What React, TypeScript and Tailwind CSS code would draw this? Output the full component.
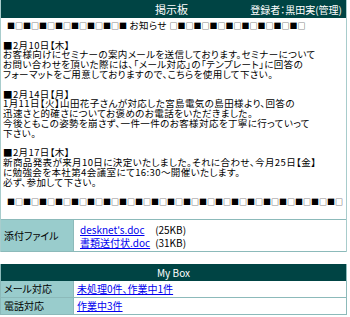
const font = {
  fontFamily: '"Noto Sans CJK JP", "Noto Sans", sans-serif',
  fontFeatureSettings: '"palt"',
};

const S = ({ children }: { children: string }) => <span className="text-[8px] tracking-normal">{children}</span>;

const lines: React.ReactNode[] = [
  <span className="pl-[4px]">
    <S>■□■□■□■□■□■□■□■</S> お知らせ <S>□■□■□■□■□■□■□■□■□</S>
  </span>,
  '',
  '■2月10日【木】',
  'お客様向けにセミナーの案内メールを送信しております。セミナーについて',
  'お問い合わせを頂いた際には、「メール対応」の「テンプレート」に回答の',
  'フォーマットをご用意しておりますので、こちらを使用して下さい。',
  '',
  '■2月14日【月】',
  '1月11日【火】山田花子さんが対応した宮島電気の島田様より、回答の',
  '迅速さと的確さについてお褒めのお電話をいただきました。',
  '今後ともこの姿勢を崩さず、一件一件のお客様対応を丁寧に行っていって',
  '下さい。',
  '',
  '■2月17日【木】',
  '新商品発表が来月10日に決定いたしました。それに合わせ、今月25日【金】',
  'に勉強会を本社第4会議室にて16:30～開催いたします。',
  '必ず、参加して下さい。',
  '',
  <span className="pl-[4px]">
    <S>■□■□■□■□■□■□■□■□■□■□■□■□■□■□■□■□■□■□■□■□■□</S>
  </span>,
  '',
];

export default function App() {
  return (
    <div className="w-[350px] h-[317px] bg-white text-[10px] text-black overflow-hidden" style={font}>
      {/* 掲示板 */}
      <div className="w-[347px] border-x border-[#a8cccc]">
        <div className="h-[18px] bg-[#004444] text-white flex items-center">
          <div className="flex-1" />
          <div className="text-[11px]">掲示板</div>
          <div className="flex-1 flex justify-end pr-[4px]">登録者：黒田実(管理)</div>
        </div>
        <div className="px-[2px] pt-[3px] pb-[2px] text-[9.5px] tracking-[0.4px] leading-[9.8px] whitespace-nowrap">
          {lines.map((l, i) => (
            <div key={i} className="h-[9.8px]">{l}</div>
          ))}
        </div>
        <div className="flex h-[33px] border-y border-[#8cbaba]">
          <div className="w-[73px] bg-[#99cccc] border-r border-[#8cbaba] flex items-center pl-[3px]">添付ファイル</div>
          <div className="flex-1 pl-[6px] pt-[3px] leading-[13px] whitespace-nowrap grid grid-cols-[auto_auto] gap-x-[5px] justify-start content-start">
            <a className="text-[#0000ee] underline">desknet's.doc</a>
            <span>(25KB)</span>
            <a className="text-[#0000ee] underline">書類送付状.doc</a>
            <span>(31KB)</span>
          </div>
        </div>
      </div>

      {/* My Box */}
      <div className="w-[347px] mt-[12px] border-x border-b border-[#8cbaba]">
        <div className="h-[17px] bg-[#004444] text-white flex items-center justify-center">My Box</div>
        <div className="flex h-[17px] border-b border-[#8cbaba]">
          <div className="w-[73px] bg-[#99cccc] border-r border-[#8cbaba] flex items-center pl-[3px]">メール対応</div>
          <div className="flex-1 flex items-center pl-[3px]">
            <a className="text-[#0000ee] underline">未処理0件、作業中1件</a>
          </div>
        </div>
        <div className="flex h-[16px]">
          <div className="w-[73px] bg-[#99cccc] border-r border-[#8cbaba] flex items-center pl-[3px]">電話対応</div>
          <div className="flex-1 flex items-center pl-[3px]">
            <a className="text-[#0000ee] underline">作業中3件</a>
          </div>
        </div>
      </div>
    </div>
  );
}
